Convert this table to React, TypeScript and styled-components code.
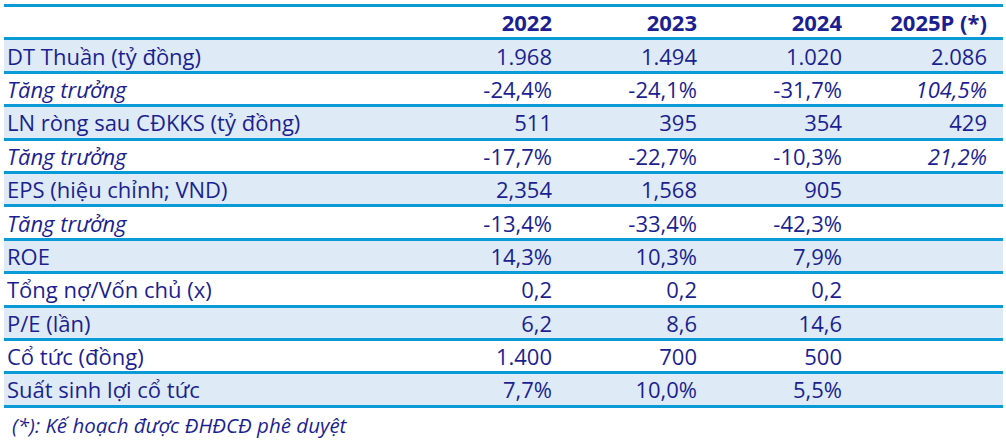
import { FunctionComponent } from "react";
import styled, { createGlobalStyle } from "styled-components";

const GlobalStyle = createGlobalStyle`
    html, body {
        margin: 0;
        padding: 0;
        background: #ffffff;
    }
    body {
        font-family: "Open Sans", "Liberation Sans", sans-serif;
        color: #1c1f8f;
    }
`;

interface RowData {
    label: string;
    values: string[];
    italic?: boolean;
    italicLast?: boolean;
}

const rows: RowData[] = [
    { label: "DT Thuần (tỷ đồng)", values: ["1.968", "1.494", "1.020", "2.086"] },
    { label: "Tăng trưởng", values: ["-24,4%", "-24,1%", "-31,7%", "104,5%"], italic: true, italicLast: true },
    { label: "LN ròng sau CĐKKS (tỷ đồng)", values: ["511", "395", "354", "429"] },
    { label: "Tăng trưởng", values: ["-17,7%", "-22,7%", "-10,3%", "21,2%"], italic: true, italicLast: true },
    { label: "EPS (hiệu chỉnh; VND)", values: ["2,354", "1,568", "905", ""] },
    { label: "Tăng trưởng", values: ["-13,4%", "-33,4%", "-42,3%", ""], italic: true },
    { label: "ROE", values: ["14,3%", "10,3%", "7,9%", ""] },
    { label: "Tổng nợ/Vốn chủ (x)", values: ["0,2", "0,2", "0,2", ""] },
    { label: "P/E (lần)", values: ["6,2", "8,6", "14,6", ""] },
    { label: "Cổ tức (đồng)", values: ["1.400", "700", "500", ""] },
    { label: "Suất sinh lợi cổ tức", values: ["7,7%", "10,0%", "5,5%", ""] },
];

const years = ["2022", "2023", "2024", "2025P (*)"];

const Wrapper = styled.main`
    padding: 4px 3px 0 4px;
`;

const Table = styled.div`
    width: 999px;
    border-bottom: 3px solid #0a9ad6;
`;

const Row = styled.div<{ $shaded?: boolean; $header?: boolean }>`
    display: grid;
    grid-template-columns: 419px repeat(4, 145px);
    height: 30.4px;
    border-top: 3px solid #0a9ad6;
    background: ${(p) => (p.$shaded ? "#deebf7" : "#ffffff")};
    font-size: 22px;
    font-weight: ${(p) => (p.$header ? 700 : 400)};
`;

const Label = styled.div<{ $italic?: boolean }>`
    display: flex;
    align-items: center;
    padding-left: 3px;
    font-style: ${(p) => (p.$italic ? "italic" : "normal")};
    white-space: nowrap;
`;

const Cell = styled.div<{ $italic?: boolean }>`
    display: flex;
    align-items: center;
    justify-content: flex-end;
    padding-right: 16px;
    font-style: ${(p) => (p.$italic ? "italic" : "normal")};
    white-space: nowrap;
`;

const Note = styled.p`
    margin: 3px 0 0 8px;
    font-size: 20.5px;
    font-style: italic;
`;

const App: FunctionComponent = () => {
    return (
        <>
            <GlobalStyle />
            <Wrapper>
                <Table>
                    <Row $header>
                        <Label />
                        {years.map((y) => (
                            <Cell key={y}>{y}</Cell>
                        ))}
                    </Row>
                    {rows.map((r, i) => (
                        <Row key={i} $shaded={i % 2 === 0}>
                            <Label $italic={r.italic}>{r.label}</Label>
                            {r.values.map((v, j) => (
                                <Cell key={j} $italic={r.italicLast && j === 3}>
                                    {v}
                                </Cell>
                            ))}
                        </Row>
                    ))}
                </Table>
                <Note>(*): Kế hoạch được ĐHĐCĐ phê duyệt</Note>
            </Wrapper>
        </>
    );
};

export default App;
